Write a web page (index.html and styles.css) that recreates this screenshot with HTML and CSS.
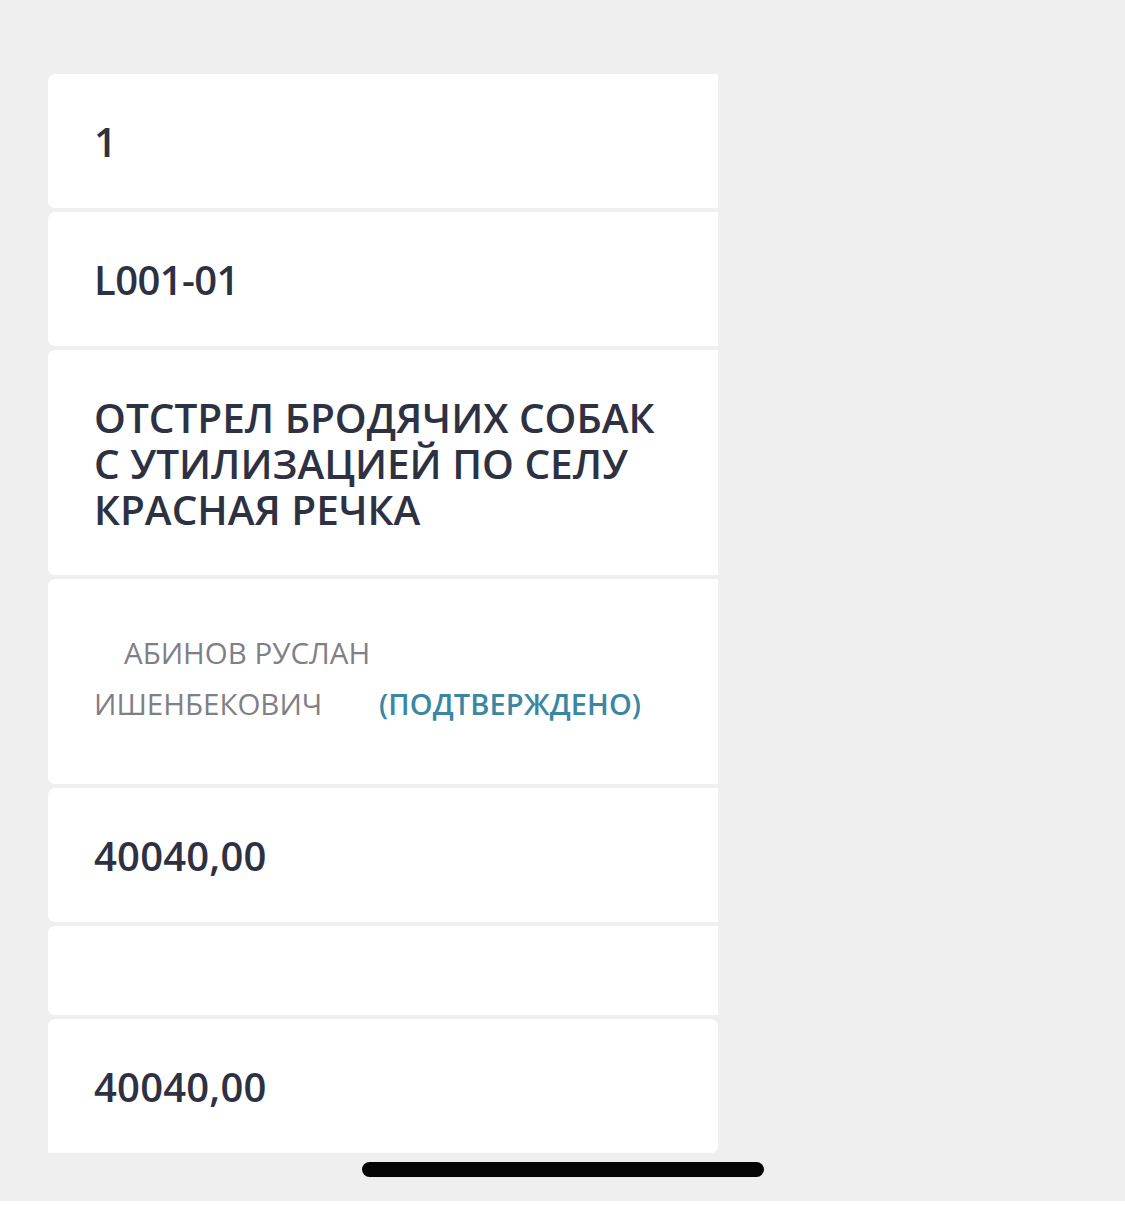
FILE: index.html
```html
<!DOCTYPE html>
<html lang="ru">
<head>
<meta charset="utf-8">
<link rel="stylesheet" href="styles.css">
</head>
<body>
<div class="screen">
  <div class="list">
    <div class="card h134 first"><span class="value">1</span></div>
    <div class="card h134"><span class="value code">L001-01</span></div>
    <div class="card h225"><span class="value title">ОТСТРЕЛ БРОДЯЧИХ СОБАК С УТИЛИЗАЦИЕЙ ПО СЕЛУ КРАСНАЯ РЕЧКА</span></div>
    <div class="card h205">
      <div class="person">
        <span class="name">АБИНОВ РУСЛАН ИШЕНБЕКОВИЧ</span>
        <span class="status">(ПОДТВЕРЖДЕНО)</span>
      </div>
    </div>
    <div class="card h134"><span class="value">40040,00</span></div>
    <div class="card h89"></div>
    <div class="card h134 last"><span class="value">40040,00</span></div>
  </div>
  <div class="home-bar"></div>
</div>
<div class="bottom-strip"></div>
</body>
</html>
```
FILE: styles.css
```css
html, body {
  margin: 0;
  padding: 0;
}
body {
  background: #efefef;
  font-family: "Open Sans", "Noto Sans", sans-serif;
  color: #2d3142;
  width: 1125px;
  height: 1206px;
  overflow: hidden;
}
.screen {
  height: 1201px;
  padding-top: 74px;
  box-sizing: border-box;
  display: flex;
  flex-direction: column;
}
.list {
  margin-left: 48px;
  width: 670px;
  display: flex;
  flex-direction: column;
  gap: 4px;
}
.card {
  background: #ffffff;
  border-radius: 7px 0 0 7px;
  padding-left: 46px;
  display: flex;
  align-items: center;
  box-sizing: border-box;
}
.card.last {
  border-radius: 7px 7px 7px 0;
}
.h134 { height: 134px; }
.h225 { height: 225px; }
.h205 { height: 205px; }
.h89 { height: 89px; }
.value {
  font-size: 40px;
  font-weight: 600;
  letter-spacing: 0.2px;
  line-height: 46px;
  margin-top: 2px;
}
.code {
  letter-spacing: -0.6px;
}
.title {
  max-width: 575px;
  margin-top: 3px;
  font-size: 40.5px;
  letter-spacing: 0;
}
.person {
  display: flex;
  align-items: flex-end;
  margin-top: -8px;
}
.name {
  width: 285px;
  text-indent: 30px;
  font-size: 29.5px;
  line-height: 51px;
  color: #7f8087;
  letter-spacing: 0;
}
.status {
  font-size: 29px;
  line-height: 51px;
  font-weight: 600;
  color: #3a86a3;
  letter-spacing: 0.1px;
}
.home-bar {
  margin: 9px auto 0;
  width: 402px;
  height: 15px;
  border-radius: 8px;
  background: #050505;
}
.bottom-strip {
  height: 5px;
  background: #ffffff;
}
```
